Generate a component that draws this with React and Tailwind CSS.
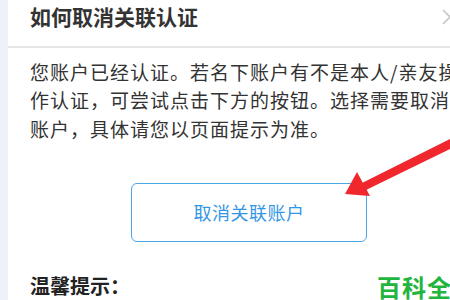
export default function App() {
  const cjk = { fontFamily: '"Noto Sans CJK SC", "Noto Sans", sans-serif' };
  return (
    <div className="relative w-[450px] h-[300px] overflow-hidden bg-[#eef1f8] flex" style={cjk}>
      <div className="w-[8px] shrink-0" />
      <div className="flex-1 bg-white flex flex-col">
        <div className="h-[51px] flex items-center pl-[22px] border-b-2 border-[#e6e6e6] relative">
          <span className="text-[21px] font-bold text-[#333] leading-none mt-[-12px]">如何取消关联认证</span>
          <svg className="absolute left-[434px] top-[9px]" width="16" height="16" viewBox="0 0 16 16">
            <path d="M1 1 L15 15 M15 1 L1 15" stroke="#c8c8c8" strokeWidth="1.6" fill="none" />
          </svg>
        </div>
        <div className="pl-[22px] pt-[10px] text-[19px] tracking-[1px] leading-[28.5px] text-[#333] whitespace-nowrap">
          <div>您账户已经认证。若名下账户有不是本人/亲友操</div>
          <div>作认证，可尝试点击下方的按钮。选择需要取消的</div>
          <div>账户，具体请您以页面提示为准。</div>
        </div>
        <div className="pl-[123px] mt-[40px]">
          <div className="w-[236px] h-[59px] border-[1.5px] border-[#4aa6e6] rounded-[6px] flex items-center justify-center text-[18px] tracking-[0.5px] text-[#3597e4]">
            取消关联账户
          </div>
        </div>
        <div className="pl-[22px] mt-[30px] text-[20px] font-bold text-[#222] leading-[28px]">温馨提示：</div>
      </div>
      <svg className="absolute left-0 top-0" width="450" height="300" viewBox="0 0 450 300">
        <path d="M452 138 L362 183 L366 190 L456 146 Z" fill="#f0282d" />
        <path d="M345 194 L357 172 L370 196 Z" fill="#f0282d" />
      </svg>
      <div className="absolute left-[377px] top-[272px] text-[24px] font-bold text-[#1fb53e] leading-[30px] whitespace-nowrap tracking-[1px]">百科全书</div>
    </div>
  );
}
